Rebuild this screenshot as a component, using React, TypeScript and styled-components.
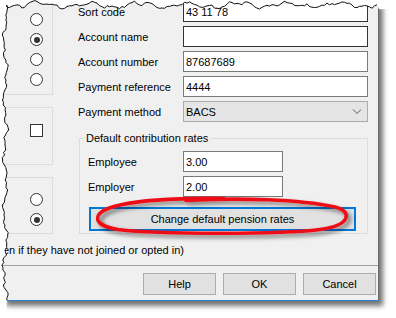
import React from 'react';
import styled, { createGlobalStyle } from 'styled-components';

const GlobalStyle = createGlobalStyle`
    html, body {
        margin: 0;
        padding: 0;
        background: #ffffff;
    }

    body {
        font-family: 'Liberation Sans', Arial, sans-serif;
        font-size: 11px;
        color: #000000;
    }

    * {
        box-sizing: border-box;
    }
`;

// small seeded random so the torn edge is the same every render
function makeRandom(seed: number) {
    return () => {
        seed = (seed + 0x6d2b79f5) | 0;
        let t = Math.imul(seed ^ (seed >>> 15), 1 | seed);
        t = (t + Math.imul(t ^ (t >>> 7), 61 | t)) ^ t;
        return ((t ^ (t >>> 14)) >>> 0) / 4294967296;
    };
}

function tornEdge() {
    const rand = makeRandom(7);
    const top: string[] = [];
    for (let x = 377; x >= 5; x -= 2.5) {
        const y = 5 + 2 * Math.sin(x / 8) + 1.3 * Math.sin(x / 3.1) + (rand() - 0.5) * 2.6;
        top.push(`${x.toFixed(1)} ${y.toFixed(1)}`);
    }
    const left: string[] = [];
    for (let y = 5; y <= 301; y += 2.5) {
        const x = 5 + 1.7 * Math.sin(y / 9) + 1 * Math.sin(y / 3.3) + (rand() - 0.5) * 2.4;
        left.push(`${x.toFixed(1)} ${y.toFixed(1)}`);
    }
    const line = `M ${top.join(' L ')} L ${left.join(' L ')}`;
    const fill = `M 0 0 L 396 0 L 396 9 L 379 9 L ${top.join(' L ')} L ${left.join(' L ')} L 6 318 L 0 318 Z`;
    return { line, fill };
}

const edge = tornEdge();

function Radio({ checked }: { checked?: boolean }) {
    return <RadioDot $checked={checked} />;
}

function App() {
    return (
        <>
            <GlobalStyle />
            <Frame>
                <Sheet>
                    <Main>
                        <LeftColumn>
                            <OptionBox $open $height={95} $padTop={13}>
                                <Radio />
                                <Radio checked />
                                <Radio />
                                <Radio />
                            </OptionBox>
                            <OptionBox $height={58} $padTop={16}>
                                <CheckBox />
                            </OptionBox>
                            <OptionBox $height={57} $padTop={15}>
                                <Radio />
                                <Radio checked />
                            </OptionBox>
                        </LeftColumn>
                        <Form>
                            <FieldRow>
                                <Label $width={105}>Sort code</Label>
                                <TextBox $dark readOnly defaultValue="43 11 78" />
                            </FieldRow>
                            <FieldRow>
                                <Label $width={105}>Account name</Label>
                                <TextBox $dark readOnly defaultValue="" />
                            </FieldRow>
                            <FieldRow>
                                <Label $width={105}>Account number</Label>
                                <TextBox readOnly defaultValue="87687689" />
                            </FieldRow>
                            <FieldRow>
                                <Label $width={105}>Payment reference</Label>
                                <TextBox readOnly defaultValue="4444" />
                            </FieldRow>
                            <FieldRow>
                                <Label $width={105}>Payment method</Label>
                                <Combo>
                                    <span>BACS</span>
                                    <svg width="10" height="6" viewBox="0 0 10 6">
                                        <polyline points="1,0.5 5,4.5 9,0.5" fill="none" stroke="#5a5a5a" strokeWidth="1" />
                                    </svg>
                                </Combo>
                            </FieldRow>
                            <GroupBox>
                                <GroupTitle>Default contribution rates</GroupTitle>
                                <GroupBody>
                                    <FieldRow>
                                        <Label $width={95}>Employee</Label>
                                        <TextBox $width={100} readOnly defaultValue="3.00" />
                                    </FieldRow>
                                    <FieldRow>
                                        <Label $width={95}>Employer</Label>
                                        <TextBox $width={100} readOnly defaultValue="2.00" />
                                    </FieldRow>
                                    <DefaultButton>Change default pension rates</DefaultButton>
                                </GroupBody>
                            </GroupBox>
                        </Form>
                    </Main>
                    <Note>en if they have not joined or opted in)</Note>
                    <Separator />
                    <ButtonBar>
                        <DialogButton>Help</DialogButton>
                        <DialogButton>OK</DialogButton>
                        <DialogButton>Cancel</DialogButton>
                    </ButtonBar>
                </Sheet>

                <Overlay viewBox="0 0 396 318">
                    <defs>
                        <filter id="penShadow" x="-10%" y="-50%" width="120%" height="200%">
                            <feDropShadow dx="3" dy="3" stdDeviation="2" floodColor="#000000" floodOpacity="0.5" />
                        </filter>
                    </defs>
                    <path
                        d="M 186 200.5 C 240 197.5, 300 199.5, 335 207 C 352 211, 352 225, 320 229.5 C 280 234.5, 160 234.5, 118 229.5 C 90 225, 91 211, 120 205 C 145 199.5, 190 198, 224 198.5"
                        fill="none"
                        stroke="#ee0f16"
                        strokeWidth="3.6"
                        strokeLinecap="round"
                        filter="url(#penShadow)"
                    />
                </Overlay>

                <Overlay viewBox="0 0 396 318">
                    <path d={edge.fill} fill="#ffffff" />
                    <path d={edge.line} fill="none" stroke="#111111" strokeWidth="1" />
                </Overlay>
            </Frame>
        </>
    );
}

const Frame = styled.div`
    position: relative;
    width: 396px;
    height: 318px;
    overflow: hidden;
    background: #ffffff;
`;

const Sheet = styled.div`
    width: 379px;
    height: 301px;

    display: flex;
    flex-direction: column;

    background: #f0f0f0;
    border-right: 1px solid #6a6a6a;
    border-bottom: 1px solid #2a7fd4;
    box-shadow: 5px 6px 5px -1px rgba(0, 0, 0, 0.55);
`;

const Main = styled.div`
    height: 234px;
    display: flex;
`;

const LeftColumn = styled.div`
    width: 53px;
    display: flex;
    flex-direction: column;
    gap: 12px;
`;

const OptionBox = styled.div<{ $open?: boolean; $height: number; $padTop: number }>`
    height: ${props => props.$height}px;
    padding-top: ${props => props.$padTop}px;
    padding-right: 9px;

    display: flex;
    flex-direction: column;
    align-items: flex-end;
    gap: 7px;

    border: 1px solid #dcdcdc;
    border-left: none;
    ${props => (props.$open ? 'border-top: none;' : '')}
`;

const RadioDot = styled.span<{ $checked?: boolean }>`
    position: relative;
    width: 13px;
    height: 13px;
    flex: none;

    border: 1px solid #333333;
    border-radius: 50%;
    background: #ffffff;

    &::after {
        content: '';
        display: ${props => (props.$checked ? 'block' : 'none')};
        position: absolute;
        left: 2.5px;
        top: 2.5px;
        width: 6px;
        height: 6px;
        border-radius: 50%;
        background: #333333;
    }
`;

const CheckBox = styled.span`
    width: 13px;
    height: 13px;
    border: 1px solid #333333;
    background: #ffffff;
`;

const Form = styled.div`
    width: 290px;
    margin-left: 25px;
    padding-top: 1px;

    display: flex;
    flex-direction: column;
    gap: 4px;
`;

const FieldRow = styled.div`
    height: 21px;
    display: flex;
    align-items: center;
`;

const Label = styled.label<{ $width: number }>`
    width: ${props => props.$width}px;
    padding-top: 2px;
    line-height: 15px;
    white-space: nowrap;
`;

const TextBox = styled.input<{ $dark?: boolean; $width?: number }>`
    width: ${props => (props.$width ? `${props.$width}px` : 'auto')};
    flex: ${props => (props.$width ? 'none' : '1')};
    height: 21px;
    margin: 0;
    padding: 0 0 0 2px;

    font: inherit;
    color: #000000;

    border: 1px solid ${props => (props.$dark ? '#333333' : '#7a7a7a')};
    border-radius: 0;
    background: #ffffff;
    outline: none;
`;

const Combo = styled.div`
    flex: 1;
    height: 21px;
    padding: 0 5px 0 2px;

    display: flex;
    align-items: center;
    justify-content: space-between;

    border: 1px solid #acacac;
    background: #e5e5e5;
`;

const GroupBox = styled.fieldset`
    margin: 5px 0 0 1px;
    padding: 0;
    min-width: 0;

    border: 1px solid #dcdcdc;
`;

const GroupTitle = styled.legend`
    margin-left: 4px;
    padding: 0 2px;
    line-height: 15px;
`;

const GroupBody = styled.div`
    padding: 5px 0 2px 8px;

    display: flex;
    flex-direction: column;
    gap: 4px;
`;

const DefaultButton = styled.button`
    width: 267px;
    height: 24px;
    margin: 6px 0 0 1px;
    padding: 0;

    font: inherit;
    color: #000000;

    border: 2px solid #0078d7;
    background: #e1e1e1;
`;

const Note = styled.div`
    margin-top: 9px;
    padding-left: 3px;
    line-height: 15px;
    white-space: nowrap;
`;

const Separator = styled.div`
    margin-top: 7px;
    border-top: 1px solid #a0a0a0;
`;

const ButtonBar = styled.div`
    padding: 7px 2px 0 0;

    display: flex;
    justify-content: flex-end;
    gap: 7px;
`;

const DialogButton = styled.button`
    width: 73px;
    height: 22px;
    padding: 0;

    font: inherit;
    color: #000000;

    border: 1px solid #adadad;
    background: #e1e1e1;
`;

const Overlay = styled.svg`
    position: absolute;
    left: 0;
    top: 0;
    width: 396px;
    height: 318px;
    pointer-events: none;
`;

export default App;
